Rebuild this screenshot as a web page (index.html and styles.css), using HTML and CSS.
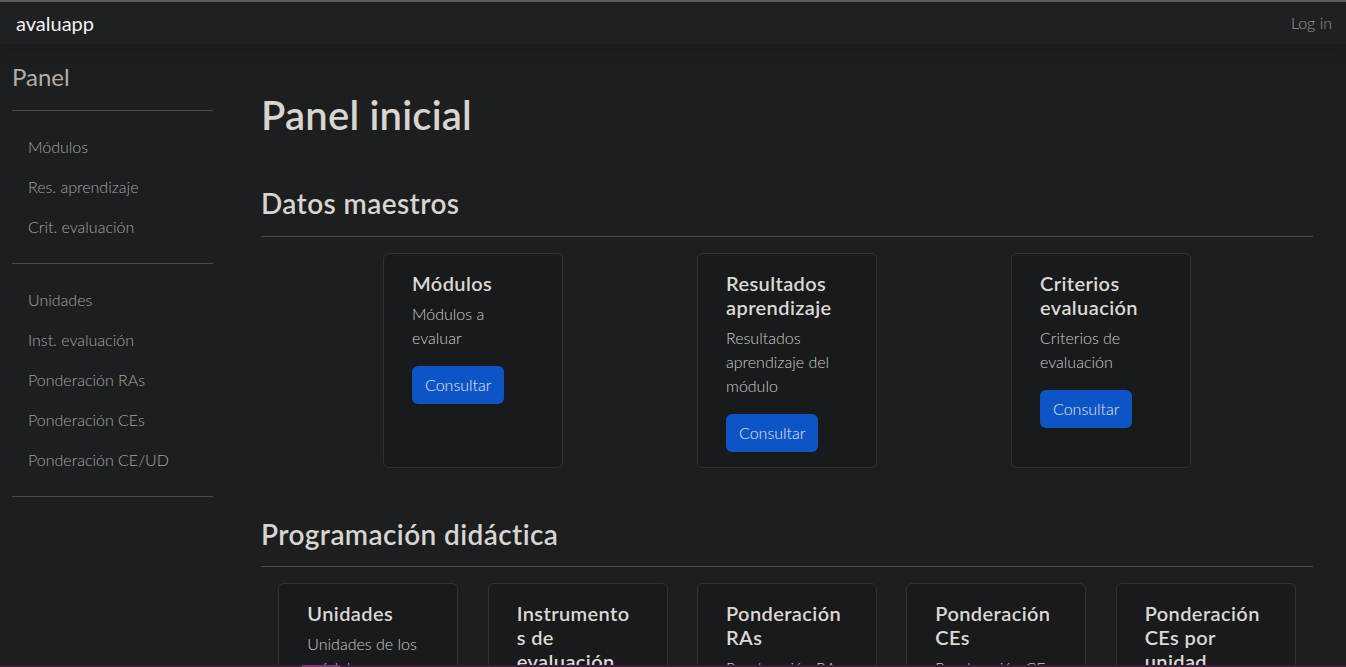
FILE: index.html
```html
<!DOCTYPE html>
<html lang="es">
<head>
<meta charset="utf-8">
<title>avaluapp</title>
<link rel="stylesheet" href="styles.css">
</head>
<body>
<header class="topbar">
  <a class="brand" href="#">avaluapp</a>
  <a class="login" href="#">Log in</a>
</header>
<div class="layout">
  <aside class="sidebar">
    <h4 class="side-title">Panel</h4>
    <hr class="side-rule">
    <nav class="side-nav">
      <a href="#">Módulos</a>
      <a href="#">Res. aprendizaje</a>
      <a href="#">Crit. evaluación</a>
    </nav>
    <hr class="side-rule">
    <nav class="side-nav">
      <a href="#">Unidades</a>
      <a href="#">Inst. evaluación</a>
      <a href="#">Ponderación RAs</a>
      <a href="#">Ponderación CEs</a>
      <a href="#">Ponderación CE/UD</a>
    </nav>
    <hr class="side-rule">
  </aside>
  <main class="main">
    <h1 class="page-title">Panel inicial</h1>

    <h3 class="section-title first">Datos maestros</h3>
    <hr class="section-rule">
    <div class="card-row">
      <div class="card">
        <h5 class="card-title">Módulos</h5>
        <p class="card-text">Módulos a evaluar</p>
        <a class="btn" href="#">Consultar</a>
      </div>
      <div class="card">
        <h5 class="card-title">Resultados aprendizaje</h5>
        <p class="card-text">Resultados aprendizaje del módulo</p>
        <a class="btn" href="#">Consultar</a>
      </div>
      <div class="card">
        <h5 class="card-title">Criterios evaluación</h5>
        <p class="card-text">Criterios de evaluación</p>
        <a class="btn" href="#">Consultar</a>
      </div>
    </div>

    <h3 class="section-title">Programación didáctica</h3>
    <hr class="section-rule">
    <div class="card-row">
      <div class="card">
        <h5 class="card-title">Unidades</h5>
        <p class="card-text">Unidades de los módulos</p>
        <a class="btn" href="#">Consultar</a>
      </div>
      <div class="card">
        <h5 class="card-title">Instrumentos de evaluación</h5>
        <p class="card-text">Instrumentos de evaluación de las unidades</p>
        <a class="btn" href="#">Consultar</a>
      </div>
      <div class="card">
        <h5 class="card-title">Ponderación RAs</h5>
        <p class="card-text">Ponderación RAs del módulo</p>
        <a class="btn" href="#">Consultar</a>
      </div>
      <div class="card">
        <h5 class="card-title">Ponderación CEs</h5>
        <p class="card-text">Ponderación CEs de los RAs</p>
        <a class="btn" href="#">Consultar</a>
      </div>
      <div class="card">
        <h5 class="card-title">Ponderación CEs por unidad</h5>
        <p class="card-text">Ponderación CEs en cada unidad</p>
        <a class="btn" href="#">Consultar</a>
      </div>
    </div>
  </main>
</div>
<div class="taskbar-edge"><span class="taskbar-mark"></span></div>
</body>
</html>
```
FILE: styles.css
```css
html {
  scrollbar-width: none;
}
html::-webkit-scrollbar {
  display: none;
}
* {
  box-sizing: border-box;
}
body {
  margin: 0;
  background: #1c1e20;
  color: #d6d2cc;
  font-family: Lato, "Liberation Sans", sans-serif;
  font-size: 16px;
  line-height: 1.5;
}
a {
  text-decoration: none;
}
.topbar {
  height: 44px;
  border-top: 2px solid #5a5a5a;
  background: #1f2022;
  display: flex;
  align-items: center;
  justify-content: space-between;
  padding: 0 14px 0 16px;
  box-shadow: 0 6px 12px rgba(0, 0, 0, 0.12);
  position: relative;
}
.brand {
  color: #f2f2f2;
  font-size: 20px;
  line-height: 30px;
}
.login {
  color: #9a9a9a;
  font-size: 16px;
  font-weight: 300;
}
.layout {
  display: flex;
}
.sidebar {
  width: 213px;
  flex: none;
  padding-left: 12px;
}
.side-title {
  margin: 19px 0 18px;
  font-size: 24px;
  line-height: 1.2;
  font-weight: 400;
  color: #b3ada6;
}
.side-rule {
  margin: 0;
  border: 0;
  border-top: 1px solid #474a4d;
}
.side-nav {
  display: flex;
  flex-direction: column;
  padding: 16px 0;
}
.side-nav a {
  padding: 8px 16px;
  color: #a8a49e;
  font-weight: 300;
  line-height: 24px;
}
.main {
  flex: 1;
  padding: 0 33px 0 48px;
  min-width: 0;
}
.page-title {
  margin: 47px 0 0;
  font-size: 40px;
  line-height: 1.2;
  font-weight: 600;
  letter-spacing: 0.2px;
  color: #d8d4ce;
}
.section-title {
  margin: 50px 0 0;
  font-size: 28px;
  line-height: 1.2;
  font-weight: 600;
  letter-spacing: 0.4px;
  color: #d8d4ce;
}
.section-title.first {
  margin-top: 48px;
}
.section-rule {
  margin: 15px 0 16px;
  border: 0;
  border-top: 1px solid #46494c;
}
.card-row {
  display: flex;
  justify-content: space-evenly;
  align-items: stretch;
  margin: 0 -12px;
}
.card {
  width: 180px;
  flex: none;
  background: #181a1b;
  border: 1px solid #303336;
  border-radius: 6px;
  padding: 17px 30px 15px 28px;
  overflow-wrap: break-word;
}
.card-title {
  margin: 0 0 7px;
  font-size: 20px;
  line-height: 24px;
  font-weight: 600;
  letter-spacing: 0.4px;
  color: #dcd8d2;
}
.card-text {
  margin: 0 0 16px;
  color: #d0ccc5;
  font-weight: 300;
}
.btn {
  display: inline-block;
  padding: 7px 13px;
  line-height: 24px;
  background: #0b55c6;
  color: #e8e6e3;
  border-radius: 6px;
  font-weight: 300;
}
.taskbar-edge {
  position: fixed;
  left: 0;
  right: 0;
  bottom: 0;
  height: 2px;
  background: #3a1d3a;
}
.taskbar-mark {
  position: absolute;
  left: 302px;
  width: 38px;
  top: 0;
  bottom: 0;
  background: #7a3a7a;
}
```
